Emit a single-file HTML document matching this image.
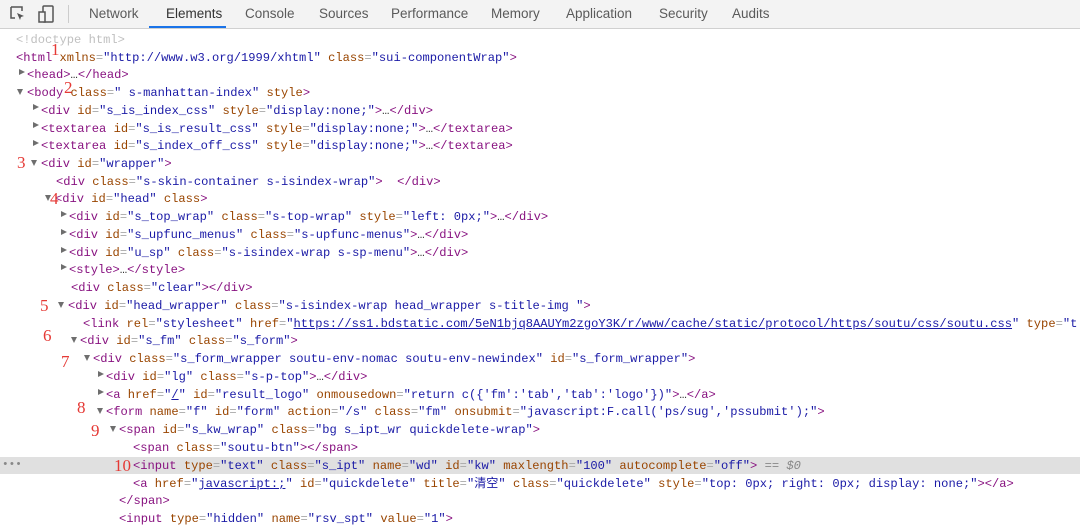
<!DOCTYPE html>
<html><head><meta charset="utf-8"><style>
body{margin:0;width:1080px;height:523px;overflow:hidden;background:#fff;position:relative;font-family:"Liberation Sans",sans-serif}
.tb{position:absolute;left:0;top:0;width:1080px;height:28px;background:#f3f3f3;border-bottom:1px solid #d0d0d0}
.tab{position:absolute;top:6px;font-size:13.5px;color:#5a5a5a}
.ul{position:absolute;left:149px;top:26px;width:77px;height:2px;background:#1a73e8}
.sep{position:absolute;left:68px;top:5px;width:1px;height:18px;background:#ccc}
.l{position:absolute;height:18px;line-height:18px;font-family:"Liberation Mono",monospace;font-size:12.1px;white-space:pre;color:#881280}
.t{color:#881280}.a{color:#994500}.v{color:#1a1aa6}.p{color:#a8a8a8}.g{color:#b0b0b0}
.u{color:#1a1aa6;text-decoration:underline}
.ar{position:absolute;width:0;height:0}
.dn{border-left:3.5px solid transparent;border-right:3.5px solid transparent;border-top:6px solid #6e6e6e}
.rt{border-top:3.5px solid transparent;border-bottom:3.5px solid transparent;border-left:6px solid #6e6e6e}
.n{position:absolute;font-family:"Liberation Serif",serif;font-size:17px;color:#e53935;line-height:17px}
.sel{position:absolute;left:0;top:457px;width:1080px;height:17px;background:#e0e0e0}
</style></head><body>
<div class="tb">
<svg style="position:absolute;left:10px;top:6px" width="16" height="16" viewBox="0 0 16 16"><path d="M1 1h11v4M1 1v11h4" fill="none" stroke="#555" stroke-width="1.5"/><path d="M7 7l7 3-3 1-1 3z" fill="#555"/></svg>
<svg style="position:absolute;left:38px;top:5px" width="18" height="18" viewBox="0 0 18 18"><rect x="5" y="1" width="10" height="16" rx="1" fill="none" stroke="#555" stroke-width="1.5"/><rect x="1" y="7" width="6" height="10" fill="#f3f3f3" stroke="#555" stroke-width="1.5"/></svg>
<div class="sep"></div>
<span class="tab" style="left:89px">Network</span>
<span class="tab" style="left:166px;color:#333">Elements</span>
<span class="tab" style="left:245px">Console</span>
<span class="tab" style="left:319px">Sources</span>
<span class="tab" style="left:391px">Performance</span>
<span class="tab" style="left:491px">Memory</span>
<span class="tab" style="left:566px">Application</span>
<span class="tab" style="left:659px">Security</span>
<span class="tab" style="left:732px">Audits</span>
<div class="ul"></div>
</div>
<div class="sel"></div>
<div class="l" style="left:2px;top:456px;color:#888;font-size:11px">•••</div>

<div class="l" style="left:16px;top:31px;color:#c0c0c0">&lt;!doctype html&gt;</div>
<div class="l" style="left:16px;top:49px">&lt;html <span class="a">xmlns</span><span class="p">=</span><span class="v">"http://www.w3.org/1999/xhtml"</span> <span class="a">class</span><span class="p">=</span><span class="v">"sui-componentWrap"</span>&gt;</div>
<div class="ar rt" style="left:19px;top:69px"></div><div class="l" style="left:27px;top:66px">&lt;head&gt;<span style="color:#333">…</span>&lt;/head&gt;</div>
<div class="ar dn" style="left:17px;top:89px"></div><div class="l" style="left:27px;top:84px">&lt;body <span class="a">class</span><span class="p">=</span><span class="v">" s-manhattan-index"</span> <span class="a">style</span>&gt;</div>
<div class="ar rt" style="left:33px;top:104px"></div><div class="l" style="left:41px;top:102px">&lt;div <span class="a">id</span><span class="p">=</span><span class="v">"s_is_index_css"</span> <span class="a">style</span><span class="p">=</span><span class="v">"display:none;"</span>&gt;<span style="color:#333">…</span>&lt;/div&gt;</div>
<div class="ar rt" style="left:33px;top:122px"></div><div class="l" style="left:41px;top:120px">&lt;textarea <span class="a">id</span><span class="p">=</span><span class="v">"s_is_result_css"</span> <span class="a">style</span><span class="p">=</span><span class="v">"display:none;"</span>&gt;<span style="color:#333">…</span>&lt;/textarea&gt;</div>
<div class="ar rt" style="left:33px;top:140px"></div><div class="l" style="left:41px;top:137px">&lt;textarea <span class="a">id</span><span class="p">=</span><span class="v">"s_index_off_css"</span> <span class="a">style</span><span class="p">=</span><span class="v">"display:none;"</span>&gt;<span style="color:#333">…</span>&lt;/textarea&gt;</div>
<div class="ar dn" style="left:31px;top:160px"></div><div class="l" style="left:41px;top:155px">&lt;div <span class="a">id</span><span class="p">=</span><span class="v">"wrapper"</span>&gt;</div>
<div class="l" style="left:56px;top:173px">&lt;div <span class="a">class</span><span class="p">=</span><span class="v">"s-skin-container s-isindex-wrap"</span>&gt;  &lt;/div&gt;</div>
<div class="ar dn" style="left:45px;top:195px"></div><div class="l" style="left:55px;top:190px">&lt;div <span class="a">id</span><span class="p">=</span><span class="v">"head"</span> <span class="a">class</span>&gt;</div>
<div class="ar rt" style="left:61px;top:211px"></div><div class="l" style="left:69px;top:208px">&lt;div <span class="a">id</span><span class="p">=</span><span class="v">"s_top_wrap"</span> <span class="a">class</span><span class="p">=</span><span class="v">"s-top-wrap"</span> <span class="a">style</span><span class="p">=</span><span class="v">"left: 0px;"</span>&gt;<span style="color:#333">…</span>&lt;/div&gt;</div>
<div class="ar rt" style="left:61px;top:229px"></div><div class="l" style="left:69px;top:226px">&lt;div <span class="a">id</span><span class="p">=</span><span class="v">"s_upfunc_menus"</span> <span class="a">class</span><span class="p">=</span><span class="v">"s-upfunc-menus"</span>&gt;<span style="color:#333">…</span>&lt;/div&gt;</div>
<div class="ar rt" style="left:61px;top:247px"></div><div class="l" style="left:69px;top:244px">&lt;div <span class="a">id</span><span class="p">=</span><span class="v">"u_sp"</span> <span class="a">class</span><span class="p">=</span><span class="v">"s-isindex-wrap s-sp-menu"</span>&gt;<span style="color:#333">…</span>&lt;/div&gt;</div>
<div class="ar rt" style="left:61px;top:264px"></div><div class="l" style="left:69px;top:261px">&lt;style&gt;<span style="color:#333">…</span>&lt;/style&gt;</div>
<div class="l" style="left:71px;top:279px">&lt;div <span class="a">class</span><span class="p">=</span><span class="v">"clear"</span>&gt;&lt;/div&gt;</div>
<div class="ar dn" style="left:58px;top:302px"></div><div class="l" style="left:68px;top:297px">&lt;div <span class="a">id</span><span class="p">=</span><span class="v">"head_wrapper"</span> <span class="a">class</span><span class="p">=</span><span class="v">"s-isindex-wrap head_wrapper s-title-img "</span>&gt;</div>
<div class="l" style="left:83px;top:315px">&lt;link <span class="a">rel</span><span class="p">=</span><span class="v">"stylesheet"</span> <span class="a">href</span><span class="p">=</span><span class="v">"<span class="u">https://ss1.bdstatic.com/5eN1bjq8AAUYm2zgoY3K/r/www/cache/static/protocol/https/soutu/css/soutu.css</span>"</span> <span class="a">type</span><span class="p">=</span><span class="v">"t</span></div>
<div class="ar dn" style="left:71px;top:337px"></div><div class="l" style="left:80px;top:332px">&lt;div <span class="a">id</span><span class="p">=</span><span class="v">"s_fm"</span> <span class="a">class</span><span class="p">=</span><span class="v">"s_form"</span>&gt;</div>
<div class="ar dn" style="left:84px;top:355px"></div><div class="l" style="left:93px;top:350px">&lt;div <span class="a">class</span><span class="p">=</span><span class="v">"s_form_wrapper soutu-env-nomac soutu-env-newindex"</span> <span class="a">id</span><span class="p">=</span><span class="v">"s_form_wrapper"</span>&gt;</div>
<div class="ar rt" style="left:98px;top:371px"></div><div class="l" style="left:106px;top:368px">&lt;div <span class="a">id</span><span class="p">=</span><span class="v">"lg"</span> <span class="a">class</span><span class="p">=</span><span class="v">"s-p-top"</span>&gt;<span style="color:#333">…</span>&lt;/div&gt;</div>
<div class="ar rt" style="left:98px;top:389px"></div><div class="l" style="left:106px;top:386px">&lt;a <span class="a">href</span><span class="p">=</span><span class="v">"<span class="u">/</span>"</span> <span class="a">id</span><span class="p">=</span><span class="v">"result_logo"</span> <span class="a">onmousedown</span><span class="p">=</span><span class="v">"return c({'fm':'tab','tab':'logo'})"</span>&gt;<span style="color:#333">…</span>&lt;/a&gt;</div>
<div class="ar dn" style="left:97px;top:408px"></div><div class="l" style="left:106px;top:403px">&lt;form <span class="a">name</span><span class="p">=</span><span class="v">"f"</span> <span class="a">id</span><span class="p">=</span><span class="v">"form"</span> <span class="a">action</span><span class="p">=</span><span class="v">"/s"</span> <span class="a">class</span><span class="p">=</span><span class="v">"fm"</span> <span class="a">onsubmit</span><span class="p">=</span><span class="v">"javascript:F.call('ps/sug','pssubmit');"</span>&gt;</div>
<div class="ar dn" style="left:110px;top:426px"></div><div class="l" style="left:119px;top:421px">&lt;span <span class="a">id</span><span class="p">=</span><span class="v">"s_kw_wrap"</span> <span class="a">class</span><span class="p">=</span><span class="v">"bg s_ipt_wr quickdelete-wrap"</span>&gt;</div>
<div class="l" style="left:133px;top:439px">&lt;span <span class="a">class</span><span class="p">=</span><span class="v">"soutu-btn"</span>&gt;&lt;/span&gt;</div>
<div class="l" style="left:133px;top:457px">&lt;input <span class="a">type</span><span class="p">=</span><span class="v">"text"</span> <span class="a">class</span><span class="p">=</span><span class="v">"s_ipt"</span> <span class="a">name</span><span class="p">=</span><span class="v">"wd"</span> <span class="a">id</span><span class="p">=</span><span class="v">"kw"</span> <span class="a">maxlength</span><span class="p">=</span><span class="v">"100"</span> <span class="a">autocomplete</span><span class="p">=</span><span class="v">"off"</span>&gt; <span style="color:#888">== <i>$0</i></span></div>
<div class="l" style="left:133px;top:474px">&lt;a <span class="a">href</span><span class="p">=</span><span class="v">"<span class="u">javascript:;</span>"</span> <span class="a">id</span><span class="p">=</span><span class="v">"quickdelete"</span> <span class="a">title</span><span class="p">=</span><span class="v">"<span style="font-family:'Noto Sans CJK SC',sans-serif">清空</span>"</span> <span class="a">class</span><span class="p">=</span><span class="v">"quickdelete"</span> <span class="a">style</span><span class="p">=</span><span class="v">"top: 0px; right: 0px; display: none;"</span>&gt;&lt;/a&gt;</div>
<div class="l" style="left:119px;top:492px">&lt;/span&gt;</div>
<div class="l" style="left:119px;top:510px">&lt;input <span class="a">type</span><span class="p">=</span><span class="v">"hidden"</span> <span class="a">name</span><span class="p">=</span><span class="v">"rsv_spt"</span> <span class="a">value</span><span class="p">=</span><span class="v">"1"</span>&gt;</div>

<div class="n" style="left:51px;top:41px">1</div>
<div class="n" style="left:64px;top:79px">2</div>
<div class="n" style="left:17px;top:154px">3</div>
<div class="n" style="left:50px;top:190px">4</div>
<div class="n" style="left:40px;top:297px">5</div>
<div class="n" style="left:43px;top:327px">6</div>
<div class="n" style="left:61px;top:353px">7</div>
<div class="n" style="left:77px;top:399px">8</div>
<div class="n" style="left:91px;top:422px">9</div>
<div class="n" style="left:114px;top:457px">10</div>
</body></html>
